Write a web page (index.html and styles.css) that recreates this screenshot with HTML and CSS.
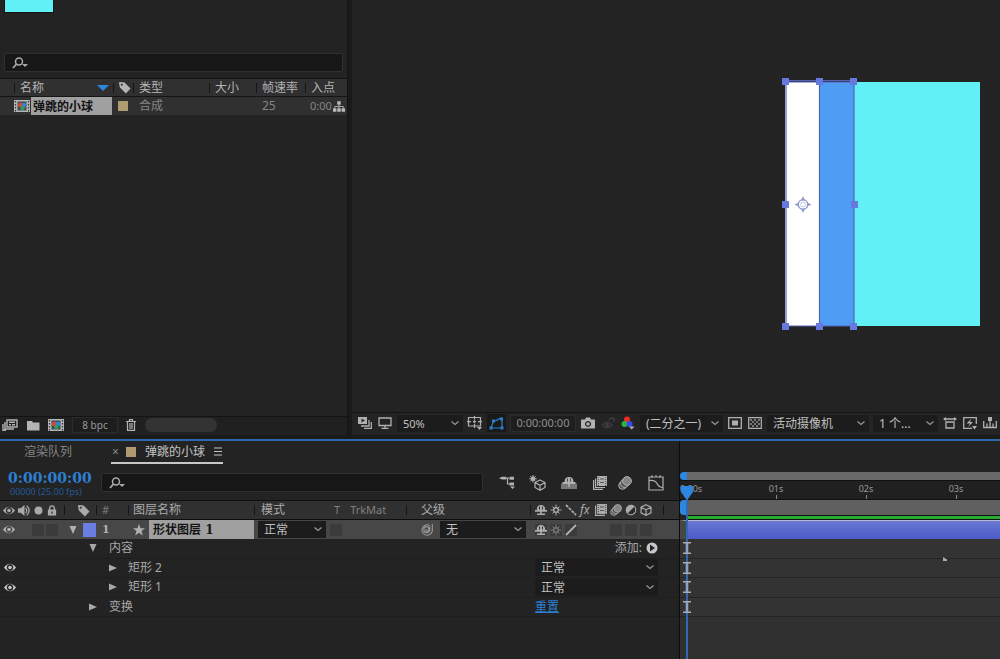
FILE: index.html
```html
<!DOCTYPE html>
<html lang="zh-CN">
<head>
<meta charset="utf-8">
<title>弹跳的小球</title>
<link rel="stylesheet" href="styles.css">
</head>
<body>
<svg class="defs" aria-hidden="true">
  <symbol id="search" viewBox="0 0 18 12"><circle cx="8" cy="4.500" r="3.500" fill="none" stroke="currentColor" stroke-width="1.500"/><path d="M5.500 7 2 11" stroke="currentColor" stroke-width="1.800"/><path d="M11 7h6l-3 3z" fill="currentColor"/></symbol>
  <symbol id="tag" viewBox="0 0 14 14"><path fill-rule="evenodd" d="M1 2 2 1l5 .5 6.500 6.500-5 5.500L2 7zM4 3a1 1 0 1 0 .1 0z" fill="currentColor"/></symbol>
  <symbol id="chev" viewBox="0 0 8 5"><path d="m.5.5 3.500 3 3.500-3" fill="none" stroke="currentColor" stroke-width="1.200"/></symbol>
  <symbol id="comp" viewBox="0 0 16 12"><path d="M0 0h16v12H0z" fill="#b5b5b5"/><path d="M1.500 1v11M14.500 1v11" stroke="#333" stroke-width="1.200" stroke-dasharray="1.500 1.500"/><path d="M3.500 1.500h9v9h-9z" fill="#394d55"/><circle cx="6.500" cy="5" r="2.500" fill="#d14938"/><circle cx="10" cy="5" r="2.300" fill="#3185d4"/><circle cx="8.500" cy="8" r="2.200" fill="#379955"/></symbol>
  <symbol id="tree" viewBox="0 0 14 12"><path d="M5 0h4v4H5zM0 8h4v4H0zM5 8h4v4H5zM10 8h4v4h-4z" fill="currentColor"/><path d="M7 4v4M2 8V6h10v2" fill="none" stroke="currentColor"/></symbol>
  <symbol id="eye" viewBox="0 0 12 10"><path fill-rule="evenodd" d="M0 5Q6-2.500 12 5 6 12.500 0 5m6-3.400a3.200 3.400 0 1 0 .1 0z" fill="currentColor"/><circle cx="6" cy="5" r="1.800" fill="currentColor"/></symbol>
  <symbol id="speaker" viewBox="0 0 12 12"><path d="M0 4h2.500L6 1v10L2.500 8H0z" fill="currentColor"/><path d="M7 3.500q2 2.500 0 5M8 1.500q4.500 4.500 0 9" fill="none" stroke="currentColor" stroke-width="1.200"/></symbol>
  <symbol id="dot" viewBox="0 0 8 8"><circle cx="4" cy="4" r="3.500" fill="currentColor"/></symbol>
  <symbol id="lock" viewBox="0 0 10 12"><path d="M2.500 6V3.500a2.500 2.500 0 0 1 5 0V6" fill="none" stroke="currentColor" stroke-width="1.500"/><path fill-rule="evenodd" d="M.5 5h9v6.500h-9zM4.300 7v2.500h1.400V7z" fill="currentColor"/></symbol>
  <symbol id="shy" viewBox="0 0 12 12"><path d="M1.800 6q0-5 4.200-5t4.200 5zM0 6h12v1.700H0zM5.200 6h1.600v5H5.200zM2 9.500h8V11H2z" fill="currentColor"/><path d="M4.500 2.500v3M7.500 2.500v3" stroke="#333"/></symbol>
  <symbol id="sun" viewBox="0 0 12 12"><circle cx="6" cy="6" r="2.300" fill="none" stroke="currentColor" stroke-width="1.400"/><path d="M6 .5v3M6 8.500v3M.5 6h3M8.500 6h3M2.500 2.500l1.500 1.500M8 8l1.500 1.500M9.500 2.500 8 4M4 8 2.500 9.500" stroke="currentColor"/></symbol>
  <symbol id="slashdots" viewBox="0 0 12 12"><path d="m1 1 10 10" stroke="currentColor" stroke-width="1.800" stroke-dasharray="3 1"/></symbol>
  <symbol id="slash" viewBox="0 0 12 12"><path d="M1 11 11 1" stroke="currentColor" stroke-width="1.800"/></symbol>
  <symbol id="film" viewBox="0 0 12 12"><path d="M.6 1.500v9.900h9.400" fill="none" stroke="currentColor" stroke-width="1.200"/><path d="M2 0h10v10H2z" fill="currentColor"/><path d="M3.300 1v9M10.700 1v9" stroke="#333" stroke-width=".8" stroke-dasharray="1"/><path d="M5 3h4M5 6.500h4" stroke="#555"/></symbol>
  <symbol id="films" viewBox="0 0 14 14"><path d="M.6 4v9.400H10M2.600 2.500v9H12" fill="none" stroke="currentColor" stroke-width="1.200"/><path d="M4 0h10v10H4z" fill="currentColor"/><path d="M5.300 1v9M12.700 1v9" stroke="#333" stroke-width=".8" stroke-dasharray="1"/><path d="M7 3h4M7 6.500h4" stroke="#555"/></symbol>
  <symbol id="blur" viewBox="0 0 14 14"><circle cx="4.500" cy="9.500" r="3.800" fill="#555" stroke="currentColor"/><circle cx="6.700" cy="7.300" r="4.200" fill="#555" stroke="currentColor"/><circle cx="9" cy="5" r="4.400" fill="#858585" stroke="currentColor"/></symbol>
  <symbol id="adjust" viewBox="0 0 12 12"><circle cx="6" cy="6" r="5" fill="currentColor"/><path d="M9.500 2.500a5 5 0 0 1-7 7z" fill="#292929"/><circle cx="6" cy="6" r="4.800" fill="none" stroke="currentColor"/></symbol>
  <symbol id="cube" viewBox="0 0 12 12"><path d="m6 .7 5 2.500v5.600l-5 2.500-5-2.500V3.200zM1 3.200l5 2.500 5-2.500M6 5.700v5.600" fill="none" stroke="currentColor" stroke-width="1.200"/></symbol>
  <symbol id="down" viewBox="0 0 8 8"><path d="M.5 0h7L4 8z" fill="currentColor"/></symbol>
  <symbol id="right" viewBox="0 0 8 8"><path d="M0 .5v7L8 4z" fill="currentColor"/></symbol>
  <symbol id="ibeam" viewBox="0 0 8 12"><path d="M0 .7h8M0 11.300h8" stroke="#a9adb5" stroke-width="1.400"/><path d="M4 1v10" stroke="#8da2c8" stroke-width="2.600"/></symbol>
</svg>

<div class="app">
  <section class="project" aria-label="项目">
    <div class="thumb"></div>
    <label class="search project-search"><svg><use href="#search"/></svg><input type="search" aria-label="搜索项目"></label>
    <table class="items">
      <colgroup><col class="c-edge"><col class="c-name"><col class="c-tag"><col class="c-type"><col class="c-size"><col class="c-rate"><col></colgroup>
      <thead><tr><th></th><th><span class="sort">名称<svg viewBox="0 0 12 6"><path d="M0 0h12L6 6z" fill="#2e86dc"/></svg></span></th><th><svg class="i13"><use href="#tag"/></svg></th><th>类型</th><th>大小</th><th>帧速率</th><th>入点</th></tr></thead>
      <tbody><tr><td></td><td><span class="item"><svg><use href="#comp"/></svg><b>弹跳的小球</b></span></td><td><i class="tan"></i></td><td>合成</td><td></td><td>25</td><td><span class="inpoint">0:00<svg><use href="#tree"/></svg></span></td></tr></tbody>
    </table>
    <footer class="project-bar">
      <button aria-label="解释素材"><svg viewBox="0 0 16 12" width="16" height="12"><path d="M5 1h10v7H5zM7 3.200h6M7 5.800h2M10 5.800h3" fill="none" stroke="currentColor" stroke-width="1.400"/><path d="M3 3v7h9M1 5v6.500h3" fill="none" stroke="currentColor" stroke-width="1.400"/></svg></button>
      <button aria-label="新建文件夹"><svg viewBox="0 0 14 11" width="14" height="11"><path d="M1 1h5l1 1.500h6.500v8H1z" fill="currentColor"/></svg></button>
      <button aria-label="新建合成"><svg width="16" height="12"><use href="#comp"/></svg></button>
      <button class="bpc">8 bpc</button>
      <button aria-label="删除"><svg viewBox="0 0 10 12" width="10" height="12"><path d="M0 2.500h10M3.500 2V.7h3V2M1.500 3v8.300h7V3M4 4v6M6 4v6" fill="none" stroke="currentColor" stroke-width="1.200"/></svg></button>
      <div class="scroll"></div>
    </footer>
  </section>

  <section class="viewer" aria-label="合成">
    <div class="stage">
      <div class="canvas">
        <div class="white"></div><div class="blue"></div><div class="cyan"></div>
        <svg class="selection" viewBox="0 0 78 252" width="78" height="252">
          <path d="M4 4h69M4 4v244h69M37.500 4v244M72 4v244M4 2.500h69" fill="none" stroke="#5563b5" stroke-width="1.200"/>
          <path d="M0 0h7v7H0zM34 0h7v7h-7zM68 0h7v7h-7zM0 123h7v7H0zM69 123h7v7h-7zM0 245h7v7H0zM34 245h7v7h-7zM68 245h7v7h-7z" fill="#6679dd"/>
          <circle cx="21" cy="126.500" r="4.800" fill="none" stroke="#8f97cb" stroke-width="1.300"/><circle cx="21" cy="126.500" r="2.400" fill="none" stroke="#c3c7df"/>
          <path d="m21 118 2 4.500h-4zM21 135l2-4.500h-4zM12.500 126.500l4.500-2v4zM29.500 126.500l-4.500-2v4z" fill="#8f97cb"/>
        </svg>
      </div>
    </div>
    <div class="viewer-bar">
      <button aria-label="始终预览"><svg viewBox="0 0 14 12" width="14" height="12"><path d="M0 0h9v7H0z" fill="currentColor"/><path d="M3 9h8V3M6 11.300h7.300V5" fill="none" stroke="currentColor" stroke-width="1.300"/><path d="m3.500 1.500 3.500 2-3.500 2z" fill="#292929"/></svg></button>
      <button aria-label="主查看器"><svg viewBox="0 0 14 12" width="14" height="12"><path d="M1 1h12v7.500H1zM7 8.500V11M3.500 11.300h7" fill="none" stroke="currentColor" stroke-width="1.300"/></svg></button>
      <span class="dd w-zoom"><select aria-label="放大率"><option>50%</option></select><svg><use href="#chev"/></svg></span>
      <button aria-label="网格"><svg viewBox="0 0 16 14" width="16" height="14"><path d="M1.500 1.500h12v8.500h-12zM7.500 0v3.500M7.500 8v4M0 5.700h4M11 5.700h4M7.500 4.200v3M6 5.700h3" fill="none" stroke="currentColor" stroke-width="1.200"/><path d="M10 11h5L12.500 14z" fill="currentColor"/></svg></button>
      <button class="on" aria-label="蒙版可见性"><svg viewBox="0 0 15 13" width="15" height="13"><path d="M2 11 4.500 4q3 0 6-2.500L13 2v9z" fill="none" stroke="currentColor" stroke-width="1.200"/><path d="M.5 9.500h3v3h-3zM3 2.500h3v3H3zM11 .5h3v3h-3zM11.500 9.500h3v3h-3z" fill="currentColor"/></svg></button>
      <button class="timebox">0:00:00:00</button>
      <button aria-label="快照"><svg viewBox="0 0 14 12" width="14" height="12"><path fill-rule="evenodd" d="M0 2.500h4L5 .5h4l1 2h4v9H0zM7 4a3 3 0 1 0 .1 0z" fill="currentColor"/><circle cx="7" cy="7" r="1.800" fill="currentColor"/></svg></button>
      <button class="dim" aria-label="显示快照"><svg viewBox="0 0 14 12" width="14" height="12"><path d="M1 8q5-5 10 0-5 5-10 0M8 3q2-3 5-1.500V5" fill="none" stroke="currentColor" stroke-width="1.500"/><circle cx="6" cy="8" r="2" fill="currentColor"/></svg></button>
      <button aria-label="通道"><svg viewBox="0 0 14 14" width="14" height="14"><circle cx="6" cy="3.500" r="3" fill="#ef2c24"/><circle cx="3.500" cy="8" r="3" fill="#28b839"/><circle cx="8.500" cy="8" r="3" fill="#3949ec"/><path d="M8 10.500h5.500L10.700 13.500z" fill="currentColor"/></svg></button>
      <span class="dd w-res"><select aria-label="分辨率"><option>(二分之一)</option></select><svg><use href="#chev"/></svg></span>
      <button aria-label="目标区域"><svg viewBox="0 0 14 12" width="14" height="12"><path d="M.7.7h12.600v10.600H.7z" fill="none" stroke="currentColor" stroke-width="1.300"/><path d="M4 3.500h6v5H4z" fill="currentColor"/></svg></button>
      <button aria-label="透明网格"><svg viewBox="0 0 14 12" width="14" height="12"><path d="M.7.7h12.600v10.600H.7z" fill="none" stroke="currentColor" stroke-width="1.200"/><path d="M2 2h2v2H2zM6 2h2v2H6zM10 2h2v2h-2zM4 4h2v2H4zM8 4h2v2H8zM2 6h2v2H2zM6 6h2v2H6zM10 6h2v2h-2zM4 8h2v2H4zM8 8h2v2H8z" fill="#777"/></svg></button>
      <span class="dd w-cam"><select aria-label="3D 视图"><option>活动摄像机</option></select><svg><use href="#chev"/></svg></span>
      <span class="dd w-view"><select aria-label="视图布局"><option>1 个...</option></select><svg><use href="#chev"/></svg></span>
      <button aria-label="像素长宽比"><svg viewBox="0 0 14 12" width="14" height="12"><path d="M3 5h8v6H3zM1 2h12" fill="none" stroke="currentColor" stroke-width="1.300"/><path d="M0 2 3 0v4zM14 2l-3-2v4z" fill="currentColor"/></svg></button>
      <button aria-label="快速预览"><svg viewBox="0 0 14 13" width="14" height="13"><path d="M9 11.300H.7V.7h12.600V7" fill="none" stroke="currentColor" stroke-width="1.300"/><path d="M8 2 3.500 6.500H7L5 10l5-5H7zM9 9h5l-2.500 3.500z" fill="currentColor"/></svg></button>
      <button aria-label="时间轴"><svg viewBox="0 0 14 12" width="14" height="12"><path d="M.7 4v6.500h12.600V4M4 6.500V10M7 4v6M10 6.500V10" fill="none" stroke="currentColor" stroke-width="1.300"/><path d="M5 0h4v4H5z" fill="currentColor"/></svg></button>
    </div>
  </section>

  <section class="timeline" aria-label="时间轴">
    <div class="layers">
      <nav class="tabs"><a class="queue" href="#queue">渲染队列</a><a class="active" href="#comp-tab"><span class="x">×</span><i class="tan"></i><span>弹跳的小球</span><svg viewBox="0 0 8 9" width="8" height="9"><path d="M0 1h8M0 4.500h8M0 8h8" stroke="currentColor"/></svg></a></nav>
      <div class="controls">
        <div class="clock"><strong>0:00:00:00</strong><small>00000 (25.00 fps)</small></div>
        <label class="search"><svg><use href="#search"/></svg><input type="search" aria-label="搜索图层"></label>
        <div class="tools">
          <button aria-label="合成微型流程图"><svg viewBox="0 0 16 13" width="16" height="13"><path d="M6 2.200h4M8.500 2.500V8H11" fill="none" stroke="currentColor" stroke-width="1.200"/><path d="M0 2.200 3 .8h4v2.800H3zM10.500.8h4.500v3h-4.500zM10.500 6.500h4.500v3h-4.500zM11 10.500h5L13.500 13z" fill="currentColor"/></svg></button>
          <button aria-label="草图 3D"><svg viewBox="0 0 17 16" width="17" height="16"><path d="m11 5 5 2.500v5l-5 2.800-5-2.800v-5zM6 7.500l5 2.700 5-2.700M11 10.200v5" fill="none" stroke="currentColor" stroke-width="1.200"/><circle cx="4" cy="3.800" r="2.300" fill="currentColor"/><path d="M4 0v7.500M.2 3.800h7.600M1.300 1.100l5.400 5.400M6.700 1.100 1.300 6.500" stroke="currentColor"/></svg></button>
          <button aria-label="消隐"><svg viewBox="0 0 16 13" width="16" height="13"><path d="M0 7.500h16V13H0z" fill="#777"/><path d="M3.500 6q0-5 4.500-5t4.500 5zM1.500 6h13v2h-13zM7.200 6h1.600v5H7.200z" fill="currentColor"/><path d="M6.500 2.500v3M9.500 2.500v3" stroke="#444"/></svg></button>
          <span class="group"><button aria-label="帧混合"><svg width="14" height="14"><use href="#films"/></svg></button><button aria-label="运动模糊"><svg width="14" height="14"><use href="#blur"/></svg></button></span>
          <button aria-label="图表编辑器"><svg viewBox="0 0 16 16" width="16" height="16"><path d="M1 2h14v13H1zM1 5.500q6-1 8 3t6 4" fill="none" stroke="currentColor" stroke-width="1.200"/><path d="M4 0v3M8 0v2M12 0v3" stroke="currentColor"/></svg></button>
        </div>
      </div>
      <div class="cols head">
        <div class="av"><svg class="i12"><use href="#eye"/></svg><svg class="i13"><use href="#speaker"/></svg><svg class="i9"><use href="#dot"/></svg><svg class="i12"><use href="#lock"/></svg></div>
        <div class="mid sep"><svg class="i13"><use href="#tag"/></svg></div>
        <div class="num sep">#</div>
        <div class="lname sep">图层名称</div>
        <div class="mode sep">模式</div>
        <div class="trk"><span>T</span><span>TrkMat</span></div>
        <div class="parent sep">父级</div>
        <div class="switches sep"><svg><use href="#shy"/></svg><svg><use href="#sun"/></svg><svg><use href="#slashdots"/></svg><em>fx</em><svg><use href="#film"/></svg><svg><use href="#blur"/></svg><svg><use href="#adjust"/></svg><svg><use href="#cube"/></svg></div>
        <div class="sep"></div>
      </div>
      <div class="cols layer">
        <div class="av"><svg class="i12"><use href="#eye"/></svg><i class="box"></i><i class="box"></i></div>
        <div class="color"><svg class="i8"><use href="#down"/></svg><i></i></div>
        <div class="num"><b>1</b></div>
        <div class="title"><svg viewBox="0 0 12 12" width="12" height="12"><path d="m6 0 1.500 4.200H12L8.500 7l1.300 4.500L6 8.800l-3.800 2.700L3.500 7 0 4.200h4.500z" fill="currentColor"/></svg><b>形状图层 1</b></div>
        <div class="drop"><span class="dd"><select aria-label="模式"><option>正常</option></select><svg><use href="#chev"/></svg></span></div>
        <div class="tmat"><i class="box"></i></div>
        <div class="pick"><svg viewBox="0 0 12 12" width="12" height="12"><path d="M11.300 0v5a5.200 5.200 0 1 1-2.500-3.500M8.800 2.500v3.200a3 3 0 1 1-3-3.100q2 0 2 2.400T5.600 7q-1-.5 0-1.500" fill="none" stroke="#999" stroke-width="1.100"/></svg><span class="dd"><select aria-label="父级"><option>无</option></select><svg><use href="#chev"/></svg></span></div>
        <div class="switches"><svg class="box"><use href="#shy"/></svg><svg class="box faint"><use href="#sun"/></svg><svg class="box"><use href="#slash"/></svg><span></span><span></span><i class="box"></i><i class="box"></i><i class="box"></i></div>
        <div></div>
      </div>
      <div class="rows">
        <div class="prop"><span class="eye"></span><div class="l1"><svg class="i8"><use href="#down"/></svg>内容</div><div class="value add">添加:<button aria-label="添加"><svg viewBox="0 0 12 12" width="12" height="12"><circle cx="6" cy="6" r="5.500" fill="#c8c8c8"/><path d="m4 2.500 5 3.500-5 3.500z" fill="#222"/></svg></button></div></div>
        <div class="prop"><span class="eye"><svg class="i12"><use href="#eye"/></svg></span><div class="l2"><svg class="i8"><use href="#right"/></svg>矩形 2</div><div class="value"><span class="dd"><select aria-label="矩形 2 模式"><option>正常</option></select><svg><use href="#chev"/></svg></span></div></div>
        <div class="prop"><span class="eye"><svg class="i12"><use href="#eye"/></svg></span><div class="l2"><svg class="i8"><use href="#right"/></svg>矩形 1</div><div class="value"><span class="dd"><select aria-label="矩形 1 模式"><option>正常</option></select><svg><use href="#chev"/></svg></span></div></div>
        <div class="prop"><span class="eye"></span><div class="l1"><svg class="i8"><use href="#right"/></svg>变换</div><div class="value"><a href="#reset">重置</a></div></div>
      </div>
    </div>
    <div class="tracks">
      <div class="navigator"></div>
      <div class="ruler"><span class="first">0:00s</span><span>01s</span><span>02s</span><span>03s</span></div>
      <div class="workarea"></div>
      <div class="cache"></div>
      <div class="bar"></div>
      <div class="rows">
        <div><svg><use href="#ibeam"/></svg></div><div><svg><use href="#ibeam"/></svg></div><div><svg><use href="#ibeam"/></svg></div><div><svg><use href="#ibeam"/></svg></div>
      </div>
      <div class="playhead"><svg viewBox="0 0 12 13" width="12" height="13"><path d="M0 0h12v6l-5 7H5L0 6z" fill="#2d86df"/></svg></div>
      <svg class="pointer" viewBox="0 0 4 4"><path d="M0 0 4 2.500V4H0z" fill="#aaa"/></svg>
    </div>
  </section>
</div>
</body>
</html>
```
FILE: styles.css
```css
* { box-sizing: border-box; }
body { margin: 0; background: #1a1a1a; color: #b4b4b4; font: 12px/16px "Noto Sans", "Noto Sans CJK SC", sans-serif; }
button { padding: 0; border: 0; background: none; color: inherit; font: inherit; display: flex; align-items: center; justify-content: center; }
a { color: inherit; text-decoration: none; }
svg { display: block; flex: none; }
.defs { position: absolute; width: 0; height: 0; }
.i8 { width: 8px; height: 8px; }
.i9 { width: 9px; height: 9px; }
.i12 { width: 12px; height: 11px; }
.i13 { width: 13px; height: 13px; }

.app { display: grid; grid-template: minmax(0, 1fr) auto / 35% minmax(0, 1fr); height: 100vh; overflow: hidden; }

.project { display: flex; flex-direction: column; margin: 0 2px 4px 0; background: #232323; border-right: 1px solid #131313; }
.thumb { width: 50px; height: 13px; margin-left: 4px; background: #60f0f6; border: 1px solid #151515; border-top: 0; }
.search { display: flex; align-items: center; height: 19px; padding-left: 6px; background: #171717; border: 1px solid #303030; border-radius: 2px; color: #aaa; }
.search svg { width: 18px; height: 12px; }
.search input { flex: 1; min-width: 0; border: 0; background: none; color: #ccc; font: inherit; outline: 0; height: 16px; }
.project-search { margin: 40px 4px 6px; }

.items { width: 100%; table-layout: fixed; border-collapse: collapse; border-top: 1px solid #111; }
.c-edge { width: 14px; }
.c-name { width: 99px; }
.c-tag { width: 20px; }
.c-type { width: 76px; }
.c-size { width: 47px; }
.c-rate { width: 49px; }
.items th, .items td { height: 18px; padding: 0 0 0 6px; font-weight: 400; text-align: left; white-space: nowrap; background: #303030; line-height: 16px; }
.items th { border-bottom: 1px solid #151515; background: linear-gradient(#161616, #161616) 0 4px / 1px 10px no-repeat #303030; }
.items th:first-child { background: #303030; }
.items td { color: #858585; }
.items td:nth-child(2) { padding-left: 0; }
.items td:last-child { padding-left: 5px; font-size: 11px; }
.items th:nth-child(3), .items td:nth-child(3) { padding-left: 5px; }
.sort { display: flex; align-items: center; justify-content: space-between; padding-right: 4px; }
.sort svg { width: 12px; height: 6px; }
.item { display: flex; align-items: center; gap: 1px; padding-right: 1px; }
.item svg { width: 16px; height: 12px; }
.item b { flex: 1; height: 18px; padding-left: 2px; background: #a0a0a0; color: #111; line-height: 20px; }
.tan { display: block; width: 10px; height: 10px; background: #b09a70; }
.inpoint { display: flex; align-items: center; gap: 1px; }
.inpoint svg { width: 12px; height: 11px; color: #bbb; }

.project-bar { display: flex; align-items: center; gap: 8px; height: 19px; margin-top: auto; padding: 0 0 2px 2px; border-top: 1px solid #141414; background: #202020; }
.bpc { width: 46px; height: 16px; border: 1px solid #2c2c2c; background: #1d1d1d; color: #999; font-size: 10px; }
.bpc + button { margin-right: 1px; }
.scroll { width: 72px; height: 14px; border-radius: 7px; background: #333; }

.viewer { display: flex; flex-direction: column; min-width: 0; margin: 0 0 4px 2px; background: #232323; overflow: hidden; }
.stage { flex: 1; display: flex; align-items: center; justify-content: flex-end; padding: 0 20px 4px 0; }
.canvas { position: relative; display: flex; width: 195px; height: 244px; }
.white { width: 34px; background: #fff; }
.blue { width: 35px; background: #4f9cf5; }
.cyan { flex: 1; background: #60f0f6; }
.selection { position: absolute; left: -3px; top: -4px; }
.viewer-bar { display: flex; align-items: center; gap: 4px; height: 23px; padding: 0 0 2px 5px; border-top: 1px solid #141414; background: #242424; }
.viewer-bar > * { flex: none; }
.viewer-bar > button { min-width: 16px; color: #b0b0b0; }
.viewer-bar > .dim { color: #3c3c3c; }
.viewer-bar > .on { width: 19px; height: 18px; background: #191919; color: #2c7ed0; }
.viewer-bar > .timebox { width: 66px; height: 17px; border: 1px solid #2c2c2c; background: #1e1e1e; color: #909090; font-size: 11px; }
.dd { position: relative; display: block; height: 17px; background: #1c1c1c; }
.dd select { appearance: none; display: block; width: 100%; height: 100%; padding: 0 14px 0 6px; border: 0; background: none; color: #c0c0c0; font: inherit; line-height: 17px; outline: 0; }
.dd svg { position: absolute; right: 4px; top: 6px; width: 8px; height: 5px; color: #999; pointer-events: none; }
.w-zoom { width: 66px; font-size: 11px; }
.w-res { width: 83px; }
.w-cam { width: 102px; }
.w-view { width: 65px; }

.timeline { grid-column: 1 / -1; display: grid; grid-template-columns: 68% minmax(0, 1fr); min-height: 220px; border-top: 2px solid #2d68aa; background: #232323; }
.layers { min-width: 0; border-right: 1px solid #0c0c0c; }
.tabs { display: flex; gap: 39px; height: 26px; padding-left: 24px; color: #858585; line-height: 22px; }
.active { display: flex; align-items: center; gap: 9px; height: 23px; padding: 0 1px; border-bottom: 2px solid #c8c8c8; color: #c5c5c5; }
.active .x { width: 6px; margin-right: -1px; color: #888; }
.controls { display: flex; align-items: center; height: 34px; border-bottom: 1px solid #0f0f0f; }
.controls .search { flex: 1; margin-bottom: 2px; }
.clock { width: 101px; padding-left: 8px; color: #2c7fd2; }
.clock strong { display: block; font: bold 14px/16px "DejaVu Serif", serif; }
.clock small { display: block; padding-left: 2px; color: #245a96; font-size: 9px; line-height: 12px; }
.tools { display: flex; align-items: center; justify-content: space-between; width: 196px; padding: 0 15px; margin-bottom: 2px; color: #b0b0b0; }
.tools button { width: 17px; }
.group { display: flex; gap: 8px; }

.cols { display: grid; grid-template-columns: 64px 32px 32px minmax(126px, 1fr) 76px 76px 124px 133px 16px; align-items: center; height: 19px; }
.head { background: #303030; border-bottom: 1px solid #0d0d0d; color: #aaa; }
.sep { background: linear-gradient(#151515, #151515) 0 50% / 1px 10px no-repeat; min-height: 18px; line-height: 18px; }
.av { display: flex; align-items: center; gap: 2px; padding-left: 3px; }
.head .av { gap: 3px; }
.mid { display: grid; place-items: center end; padding-right: 6px; }
.num { padding-left: 6px; }
.head .num, .trk { color: #808080; font-size: 11px; }
.lname { padding-left: 5px; }
.mode { padding-left: 7px; }
.trk { display: flex; gap: 10px; padding-left: 4px; }
.parent { padding-left: 15px; }
.switches { display: grid; grid-template-columns: repeat(8, 12px); gap: 3px; align-items: center; padding-left: 5px; }
.switches svg { width: 12px; height: 12px; }
.switches em { font-family: "Noto Sans", sans-serif; font-size: 12px; }
.layer { height: 19px; background: #474747; color: #b0b0b0; }
.box { display: block; width: 12px; height: 12px; background: #3b3b3b; }
.faint { color: #777; }
.layer .av .i12 + .box { margin-left: 15px; }
.color { display: flex; align-items: center; gap: 6px; padding-left: 5px; }
.color i { width: 14px; height: 14px; background: #6a7de2; }
.num b, .title b { font-family: "DejaVu Serif", "Noto Sans CJK SC", serif; font-size: 11px; }
.title { display: flex; align-items: center; gap: 4px; padding-left: 5px; }
.title b { flex: 1; height: 19px; padding-left: 4px; background: #a0a0a0; color: #151515; font-size: 12px; line-height: 20px; }
.drop { padding: 0 4px; }
.pick { display: flex; align-items: center; gap: 7px; padding: 0 4px 0 15px; }
.pick .dd { flex: 1; }

.rows { display: grid; grid-auto-rows: 1fr; height: 78px; }
.prop { display: flex; align-items: center; border-bottom: 1px solid #1e1e1e; color: #a8a8a8; line-height: 18px; }
.eye { width: 89px; padding-left: 4px; color: #c8c8c8; }
.l1, .l2 { flex: 1; display: flex; align-items: center; gap: 12px; }
.l2 { padding-left: 20px; gap: 11px; }
.value { width: 144px; padding-right: 21px; }
.value a { color: #2c7fd2; text-decoration: underline; }
.add { display: flex; justify-content: flex-end; gap: 4px; }

.tracks { position: relative; min-width: 0; overflow: hidden; padding-top: 31px; }
.navigator { height: 8px; background: linear-gradient(90deg, #2d86df 7px, #686868 7px); border-radius: 4px 0 0 4px; }
.ruler { display: flex; height: 20px; border-top: 1px solid #111; border-bottom: 1px solid #111; background: #202020; }
.ruler span { flex: none; width: 90px; height: 18px; background: linear-gradient(#888, #888) 50% 100% / 1px 4px no-repeat; color: #999; font-size: 9px; line-height: 16px; text-align: center; }
.ruler .first { width: 51px; background: none; text-align: left; }
.workarea { height: 15px; background: linear-gradient(90deg, #2d86df 6px, #606060 6px); border-radius: 4px 0 0 4px; }
.cache { height: 5px; margin-left: 7px; border: 1px solid #101010; border-right: 0; background: #25aa32; }
.bar { height: 19px; border-left: 7px solid #474747; border-top: 1px solid #b5b9d5; background: linear-gradient(#6979d2, #4a5bc9); }
.tracks .rows > div { display: flex; align-items: center; padding-left: 3px; border-bottom: 1px solid #242424; background: #333; }
.tracks .rows svg { position: relative; z-index: 1; width: 8px; height: 12px; }
.tracks::after { content: ""; display: block; height: 100%; background: #303030; }
.playhead { position: absolute; left: 1px; top: 45px; bottom: 0; width: 12px; background: linear-gradient(#3269ad, #3269ad) 5px 0 / 2px 100% no-repeat; }
.pointer { position: absolute; left: 263px; top: 116px; width: 4px; height: 4px; }
```
